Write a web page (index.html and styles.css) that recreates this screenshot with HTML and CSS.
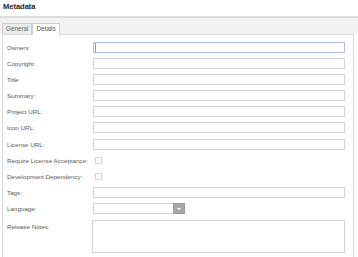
FILE: index.html
```html
<!DOCTYPE html>
<html lang="en">
<head>
    <meta charset="UTF-8">
    <title>Metadata</title>
    <link rel="stylesheet" href="styles.css">
</head>
<body>
    <h1 class="title">Metadata</h1>
    <div class="tab-strip">
        <div class="tab">General</div>
        <div class="tab active">Details</div>
    </div>
    <div class="panel">
        <div class="form">
            <label>Owners:</label>
            <input type="text" class="field focused">
            <label>Copyright:</label>
            <input type="text" class="field">
            <label>Title:</label>
            <input type="text" class="field">
            <label>Summary:</label>
            <input type="text" class="field">
            <label>Project URL:</label>
            <input type="text" class="field">
            <label>Icon URL:</label>
            <input type="text" class="field">
            <label>License URL:</label>
            <input type="text" class="field">
            <label>Require License Acceptance:</label>
            <div class="check-cell"><span class="checkbox"></span></div>
            <label>Development Dependency:</label>
            <div class="check-cell"><span class="checkbox"></span></div>
            <label>Tags:</label>
            <input type="text" class="field">
            <label>Language:</label>
            <div class="select">
                <span class="select-box"></span>
                <span class="select-btn"></span>
            </div>
            <label class="top">Release Notes:</label>
            <div class="textarea"></div>
        </div>
    </div>
</body>
</html>
```

FILE: styles.css
```css
body {
    margin: 0;
    font-family: "Liberation Sans", Arial, sans-serif;
    background: #fff;
    color: #555;
    overflow: hidden;
}
.title {
    margin: 0;
    padding: 2px 3px 0;
    height: 13.5px;
    font-size: 7.5px;
    line-height: 9px;
    font-weight: bold;
    color: #222;
}
.tab-strip {
    border-top: 2px solid #dcdcdc;
    background: #f2f2f2;
    height: 16px;
    display: flex;
    align-items: flex-end;
    padding-left: 2px;
}
.tab {
    font-size: 6.3px;
    height: 10px;
    line-height: 10px;
    padding: 0 3px;
    border: 1px solid #cfcfcf;
    border-bottom: none;
    background: #ececec;
    color: #666;
}
.tab.active {
    background: #fff;
    height: 11px;
    padding: 0 3px;
    margin-bottom: -1px;
    color: #555;
    position: relative;
}
.panel {
    margin-left: 2px;
    width: 352px;
    height: 230px;
    border: 1px solid #dadada;
    border-bottom: none;
    box-sizing: border-box;
    padding: 7px 8px 0 4px;
}
.form {
    display: grid;
    grid-template-columns: 86px 1fr;
    grid-auto-rows: 11px;
    row-gap: 5.2px;
    align-items: center;
}
label {
    font-size: 6.25px;
    color: #595959;
    white-space: nowrap;
}
label.top {
    align-self: start;
    margin-top: 3px;
}
.field {
    height: 11px;
    box-sizing: border-box;
    border: 1px solid #d3d3d3;
    margin: 0;
    padding: 0;
    width: 100%;
    background: #fff;
    outline: none;
}
.field.focused {
    border-color: #a6bdf2;
    box-shadow: inset 1px 0 0 0 #fff, inset 2px 0 0 0 #999;
}
.check-cell {
    display: flex;
    align-items: center;
    padding-left: 2px;
}
.checkbox {
    width: 7px;
    height: 7px;
    box-sizing: border-box;
    border: 1px solid #cfcfcf;
    border-radius: 1px;
    background: #fff;
}
.select {
    display: flex;
    width: 92px;
    height: 11px;
}
.select-box {
    flex: 1;
    border: 1px solid #d3d3d3;
    border-right: none;
    background: #fff;
}
.select-btn {
    width: 12px;
    background: #a8a8a8;
    border: 1px solid #999;
    box-sizing: border-box;
    display: flex;
    align-items: center;
    justify-content: center;
}
.select-btn::after {
    content: "";
    border-left: 2px solid transparent;
    border-right: 2px solid transparent;
    border-top: 2px solid #fff;
}
.textarea {
    grid-row: span 3;
    align-self: start;
    height: 33px;
    margin-left: -1px;
    border: 1px solid #d3d3d3;
    box-sizing: border-box;
    background: #fff;
}
```
